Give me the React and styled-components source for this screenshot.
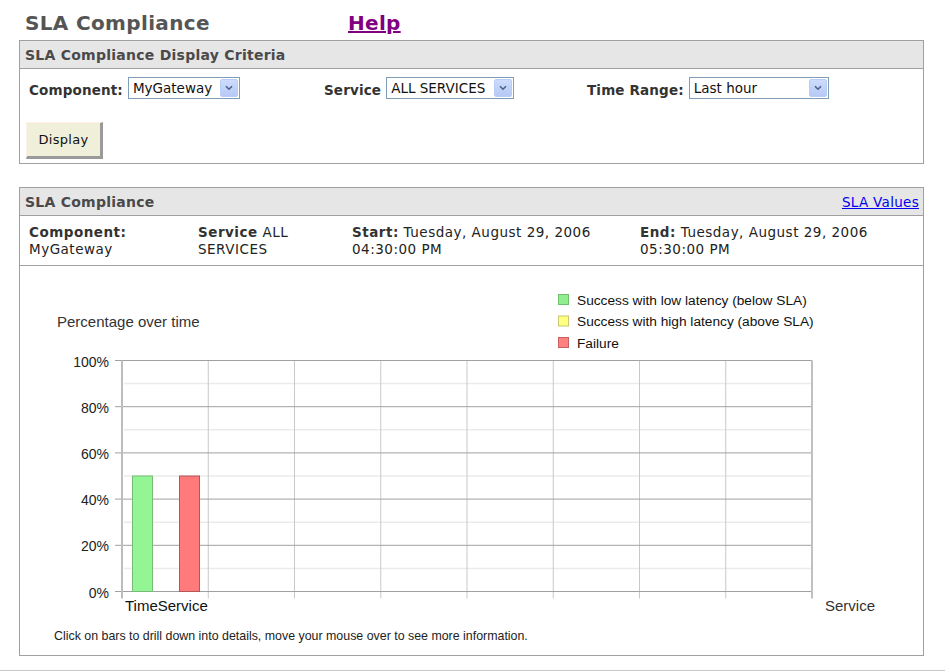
import styled, { createGlobalStyle } from "styled-components";

const GlobalStyle = createGlobalStyle`
  html, body {
    margin: 0;
    padding: 0;
    background: #fff;
  }
  body {
    font-family: "DejaVu Sans", Verdana, sans-serif;
    font-size: 13px;
    color: #222;
  }
`;

const GRID_TOP = 94.5;
const STEP = 46.2;
const PLOT_LEFT = 102;
const PLOT_RIGHT = 792;
const COL = 86.25;

function Chevron() {
  return (
    <svg width="8" height="6" viewBox="0 0 8 6">
      <path d="M1 1.2 L4 4.2 L7 1.2" fill="none" stroke="#4d6185" strokeWidth="1.6" />
    </svg>
  );
}

function Dropdown({ value, width }) {
  return (
    <SelectBox $width={width}>
      <SelectText>{value}</SelectText>
      <ArrowButton>
        <Chevron />
      </ArrowButton>
    </SelectBox>
  );
}

function ComplianceChart() {
  const labels = ["100%", "80%", "60%", "40%", "20%", "0%"];
  const bottom = GRID_TOP + STEP * 5;
  const barTop = GRID_TOP + STEP * 2.5;
  const legend = [
    { fill: "#90ee90", stroke: "#6fbf6f", text: "Success with low latency (below SLA)" },
    { fill: "#ffff80", stroke: "#c8c870", text: "Success with high latency (above SLA)" },
    { fill: "#ff8080", stroke: "#c86060", text: "Failure" },
  ];

  return (
    <svg width="902" height="389" viewBox="0 0 902 389">
      <g fontFamily="'Liberation Sans', Arial, sans-serif">
        <text x="37" y="61" fontSize="15" fill="#333">Percentage over time</text>

        {legend.map((l, i) => (
          <g key={l.text}>
            <rect x="538.5" y={28.5 + i * 21.5} width="10" height="10" fill={l.fill} stroke={l.stroke} />
            <text x="557" y={38.5 + i * 21.5} fontSize="13.7" fill="#111">{l.text}</text>
          </g>
        ))}

        {/* minor gridlines */}
        {[0, 1, 2, 3, 4].map((i) => (
          <line
            key={"m" + i}
            x1={PLOT_LEFT + 2}
            x2={PLOT_RIGHT}
            y1={GRID_TOP + STEP * i + STEP / 2}
            y2={GRID_TOP + STEP * i + STEP / 2}
            stroke="#ebebeb"
            strokeWidth="1.5"
          />
        ))}

        {/* vertical gridlines */}
        {[1, 2, 3, 4, 5, 6, 7].map((i) => (
          <line
            key={"v" + i}
            x1={PLOT_LEFT + COL * i}
            x2={PLOT_LEFT + COL * i}
            y1={GRID_TOP}
            y2={bottom + 7}
            stroke="#c8c8c8"
          />
        ))}

        {/* major gridlines */}
        {labels.map((label, i) => (
          <g key={label}>
            <line
              x1={PLOT_LEFT - 7}
              x2={PLOT_RIGHT}
              y1={GRID_TOP + STEP * i}
              y2={GRID_TOP + STEP * i}
              stroke="#a0a0a0"
            />
            <text x="89" y={GRID_TOP + STEP * i + 6} fontSize="14" fill="#222" textAnchor="end">
              {label}
            </text>
          </g>
        ))}

        <line x1={PLOT_RIGHT} x2={PLOT_RIGHT} y1={GRID_TOP} y2={bottom + 7} stroke="#c0c0c0" strokeWidth="2" />
        <line x1={PLOT_LEFT} x2={PLOT_LEFT} y1={GRID_TOP} y2={bottom + 7} stroke="#bdbdbd" strokeWidth="2" />

        <rect x="112.5" y={barTop} width="20" height={bottom - barTop} fill="#94f594" stroke="#77bb77" />
        <rect x="159.5" y={barTop} width="20" height={bottom - barTop} fill="#ff7b7b" stroke="#b55555" />

        <text x="105" y="345" fontSize="15" fill="#111">TimeService</text>
        <text x="805" y="345" fontSize="15" fill="#333">Service</text>

        <text x="34" y="374" fontSize="12.4" fill="#222">
          Click on bars to drill down into details, move your mouse over to see more information.
        </text>
      </g>
    </svg>
  );
}

export default function App() {
  return (
    <Page>
      <GlobalStyle />
      <TitleRow>
        <PageTitle>SLA Compliance</PageTitle>
        <HelpLink href="#">Help</HelpLink>
      </TitleRow>

      <Panel>
        <PanelHeader>
          <PanelTitle>SLA Compliance Display Criteria</PanelTitle>
        </PanelHeader>
        <CriteriaRow>
          <Field>
            <FieldLabel>Component:</FieldLabel>
            <Dropdown value="MyGateway" width={112} />
          </Field>
          <Field>
            <FieldLabel>Service</FieldLabel>
            <Dropdown value="ALL SERVICES" width={128} />
          </Field>
          <Field>
            <FieldLabel>Time Range:</FieldLabel>
            <Dropdown value="Last hour" width={140} />
          </Field>
        </CriteriaRow>
        <ButtonRow>
          <DisplayButton type="button">Display</DisplayButton>
        </ButtonRow>
      </Panel>

      <Panel $gap>
        <PanelHeader>
          <PanelTitle>SLA Compliance</PanelTitle>
          <ValuesLink href="#">SLA Values</ValuesLink>
        </PanelHeader>
        <InfoRow>
          <InfoCell>
            <b>Component:</b>
            <br />
            MyGateway
          </InfoCell>
          <InfoCell>
            <b>Service</b> ALL
            <br />
            SERVICES
          </InfoCell>
          <InfoCell>
            <b>Start:</b> Tuesday, August 29, 2006
            <br />
            04:30:00 PM
          </InfoCell>
          <InfoCell>
            <b>End:</b> Tuesday, August 29, 2006
            <br />
            05:30:00 PM
          </InfoCell>
        </InfoRow>
        <ChartArea>
          <ComplianceChart />
        </ChartArea>
      </Panel>

      <Rule />
    </Page>
  );
}

const Page = styled.div`
  width: 951px;
  padding: 0 0 0 19px;
  box-sizing: border-box;
`;

const TitleRow = styled.div`
  display: flex;
  align-items: baseline;
  height: 40px;
  padding-left: 6px;
  box-sizing: border-box;
  padding-top: 9px;
`;

const PageTitle = styled.h1`
  margin: 0;
  width: 323px;
  font-size: 20px;
  line-height: 28px;
  font-weight: bold;
  letter-spacing: 0.35px;
  color: #555;
`;

const HelpLink = styled.a`
  font-size: 20px;
  line-height: 28px;
  font-weight: bold;
  letter-spacing: 0.3px;
  color: #800080;
  text-decoration: underline;
`;

const Panel = styled.div`
  width: 905px;
  box-sizing: border-box;
  border: 1px solid #a0a0a0;
  margin-top: ${(p) => (p.$gap ? "23px" : "0")};
`;

const PanelHeader = styled.div`
  display: flex;
  align-items: center;
  justify-content: space-between;
  height: 27px;
  padding: 0 4px 0 5px;
  background: #e6e6e6;
  border-bottom: 1px solid #a0a0a0;
`;

const PanelTitle = styled.span`
  font-size: 14px;
  font-weight: bold;
  letter-spacing: 0.25px;
  color: #4a4a4a;
`;

const ValuesLink = styled.a`
  font-size: 13.5px;
  letter-spacing: 0.3px;
  color: #0000ee;
  text-decoration: underline;
`;

const CriteriaRow = styled.div`
  display: grid;
  grid-template-columns: 295px 263px 1fr;
  padding: 8px 0 0 9px;
`;

const Field = styled.div`
  display: flex;
  align-items: center;
  gap: 5px;
`;

const FieldLabel = styled.span`
  font-size: 13.5px;
  font-weight: bold;
  letter-spacing: 0.15px;
  color: #333;
  padding-top: 4px;
`;

const SelectBox = styled.div`
  display: flex;
  align-items: center;
  justify-content: space-between;
  width: ${(p) => p.$width}px;
  height: 22px;
  box-sizing: border-box;
  border: 1px solid #7f9db9;
  background: #fff;
  padding: 1px 1px 1px 4px;
`;

const SelectText = styled.span`
  font-size: 13.5px;
  color: #111;
  white-space: nowrap;
`;

const ArrowButton = styled.span`
  display: flex;
  align-items: center;
  justify-content: center;
  width: 18px;
  height: 18px;
  box-sizing: border-box;
  border: 1px solid #b9cdf7;
  border-radius: 2px;
  background: linear-gradient(#cddcfd, #b6c9f6);
`;

const ButtonRow = styled.div`
  padding: 23px 0 4px 6px;
`;

const DisplayButton = styled.button`
  width: 77px;
  height: 37px;
  font-family: "DejaVu Sans", Verdana, sans-serif;
  font-size: 13px;
  letter-spacing: 0.3px;
  color: #111;
  background: #f0efd9;
  border-style: solid;
  border-width: 1px 3px 3px 1px;
  border-color: #fff0e8 #9a9a9a #9a9a9a #fff0e8;
  padding: 0;
  cursor: pointer;
`;

const InfoRow = styled.div`
  display: grid;
  grid-template-columns: 169px 154px 288px 1fr;
  padding: 8px 0 7px 9px;
  border-bottom: 1px solid #a0a0a0;
`;

const InfoCell = styled.div`
  font-size: 13.5px;
  line-height: 17px;
  letter-spacing: 0.5px;
  color: #222;
  white-space: nowrap;

  b {
    color: #333;
  }
`;

const ChartArea = styled.div`
  display: flex;
  height: 389px;
`;

const Rule = styled.div`
  margin: 14px 0 0 -19px;
  width: 945px;
  border-top: 1px solid #c8c8c8;
`;
